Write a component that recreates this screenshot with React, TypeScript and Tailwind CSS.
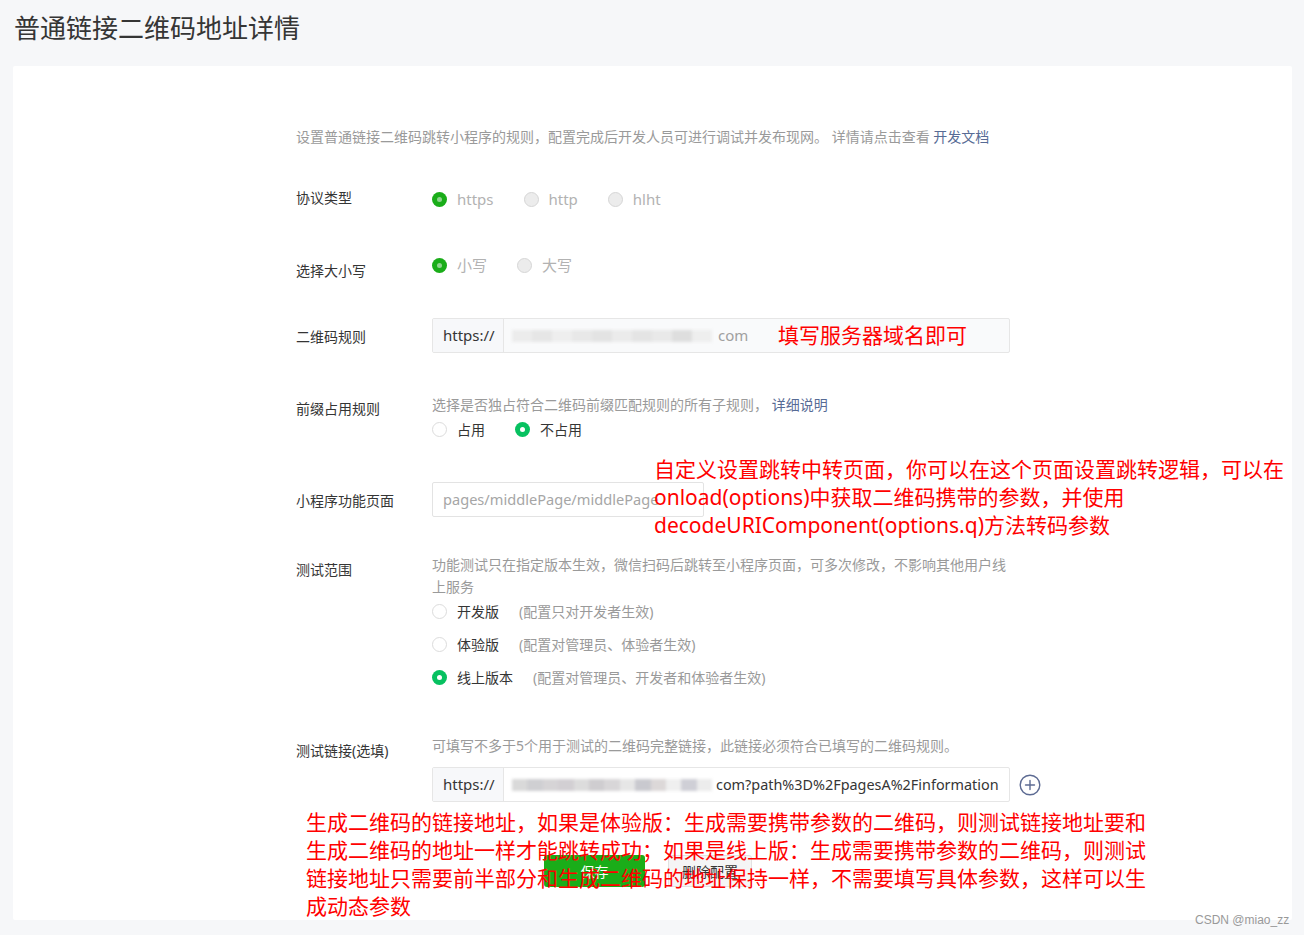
import { ReactNode } from "react";

const FONT = "font-['Noto_Sans','Noto_Sans_CJK_SC',sans-serif]";

type RadioKind = "on" | "onDisabled" | "off" | "offDisabled";

function Radio({ kind }: { kind: RadioKind }) {
  if (kind === "on" || kind === "onDisabled") {
    return (
      <span
        className={`flex h-[15px] w-[15px] shrink-0 items-center justify-center rounded-full ${
          kind === "on" ? "bg-[#07c160]" : "bg-[#1aad19]"
        }`}
      >
        <span
          className={`h-[5px] w-[5px] rounded-full ${kind === "on" ? "bg-white" : "bg-[#8fd48e]"}`}
        />
      </span>
    );
  }
  return (
    <span
      className={`h-[15px] w-[15px] shrink-0 rounded-full border ${
        kind === "off" ? "border-[#dcdcdc] bg-white" : "border-[#d6d6d6] bg-[#ececec]"
      }`}
    />
  );
}

function Option({ kind, label, note, muted }: { kind: RadioKind; label: string; note?: string; muted?: boolean }) {
  return (
    <label className="flex h-5 items-center">
      <Radio kind={kind} />
      <span className={`ml-[10px] ${muted ? "text-[15px] text-[#b2b2b2]" : "text-[14px] text-[#353535]"}`}>{label}</span>
      {note && <span className="ml-5 text-[14px] text-[#9a9a9a]">{note}</span>}
    </label>
  );
}

function Row({ label, labelTop, top, children }: { label: string; labelTop: string; top: string; children: ReactNode }) {
  return (
    <div className={`flex ${top}`}>
      <div className={`w-[136px] shrink-0 text-[14px] leading-5 text-[#353535] ${labelTop}`}>{label}</div>
      <div className="flex-1">{children}</div>
    </div>
  );
}

// blurred-out domain in the screenshot
function Blurred({ shades }: { shades: string[] }) {
  return (
    <div className="flex h-[12px] w-[200px] shrink-0 items-center blur-[1.5px]">
      {shades.map((c, i) => (
        <span key={i} className="h-full flex-1" style={{ backgroundColor: c }} />
      ))}
    </div>
  );
}

function PlusCircle() {
  return (
    <svg width="22" height="22" viewBox="0 0 22 22" fill="none" stroke="#5d6b93" strokeWidth="1.4">
      <circle cx="11" cy="11" r="9.8" />
      <path d="M11 6.5v9M6.5 11h9" strokeLinecap="round" />
    </svg>
  );
}

export default function App() {
  return (
    <div className={`relative h-[935px] w-full overflow-hidden bg-[#f6f7f9] ${FONT}`}>
      <h1 className="px-[14px] pt-[10px] text-[26px] leading-9 text-[#353535]">普通链接二维码地址详情</h1>

      <div className="relative ml-[13px] mr-[12px] mt-[20px] h-[854px] rounded-[2px] bg-white pl-[283px]">
        <p className="pt-[61px] text-[14px] leading-5 text-[#9a9a9a]">
          设置普通链接二维码跳转小程序的规则，配置完成后开发人员可进行调试并发布现网。 详情请点击查看{" "}
          <a className="text-[#576b95]">开发文档</a>
        </p>

        <Row label="协议类型" labelTop="mt-[-1px]" top="mt-[42px]">
          <div className="flex items-center gap-[30px]">
            <Option kind="onDisabled" label="https" muted />
            <Option kind="offDisabled" label="http" muted />
            <Option kind="offDisabled" label="hlht" muted />
          </div>
        </Row>

        <Row label="选择大小写" labelTop="mt-[6px]" top="mt-[46px]">
          <div className="flex items-center gap-[30px]">
            <Option kind="onDisabled" label="小写" muted />
            <Option kind="offDisabled" label="大写" muted />
          </div>
        </Row>

        <Row label="二维码规则" labelTop="mt-[9px]" top="mt-[37px]">
          <div className="relative flex h-[35px] w-[578px] overflow-hidden rounded-[2px] border border-[#e6e6e6] bg-[#f9fafb]">
            <div className="flex w-[71px] items-center border-r border-[#e6e6e6] bg-[#f7f8fa] pl-[10px] text-[15px] text-[#353535]">
              https://
            </div>
            <div className="flex items-center whitespace-nowrap pl-[8px] text-[15px] text-[#a0a0a0]">
              <Blurred shades={["#ececec", "#e6e6e6", "#eeeeee", "#e8e8e8", "#e3e3e3", "#ebebeb", "#e4e4e4", "#e9e9e9", "#dedede", "#eeeeee"]} />
              <span className="ml-[6px]">com</span>
            </div>
            <span className="absolute left-[345px] top-[2px] text-[21px] leading-7 text-[#ff0000]">填写服务器域名即可</span>
          </div>
        </Row>

        <Row label="前缀占用规则" labelTop="mt-[4px]" top="mt-[42px]">
          <p className="text-[14px] leading-5 text-[#9a9a9a]">
            选择是否独占符合二维码前缀匹配规则的所有子规则， <a className="text-[#576b95]">详细说明</a>
          </p>
          <div className="mt-[4px] flex items-center gap-[30px]">
            <Option kind="off" label="占用" />
            <Option kind="on" label="不占用" />
          </div>
        </Row>

        <Row label="小程序功能页面" labelTop="mt-[9px]" top="mt-[43px]">
          <div className="flex h-[35px] w-[272px] items-center overflow-hidden whitespace-nowrap rounded-[2px] border border-[#e3e3e3] bg-white pl-[10px] text-[14.6px] text-[#a6a6a6]">
            pages/middlePage/middlePage
          </div>
        </Row>

        <Row label="测试范围" labelTop="mt-[6px]" top="mt-[37px]">
          <p className="w-[580px] text-[14px] leading-[22px] text-[#9a9a9a]">
            功能测试只在指定版本生效，微信扫码后跳转至小程序页面，可多次修改，不影响其他用户线上服务
          </p>
          <div className="mt-[3px] flex flex-col gap-[13px]">
            <Option kind="off" label="开发版" note="(配置只对开发者生效)" />
            <Option kind="off" label="体验版" note="(配置对管理员、体验者生效)" />
            <Option kind="on" label="线上版本" note="(配置对管理员、开发者和体验者生效)" />
          </div>
        </Row>

        <Row label="测试链接(选填)" labelTop="mt-[5px]" top="mt-[49px]">
          <p className="text-[14px] leading-5 text-[#9a9a9a]">可填写不多于5个用于测试的二维码完整链接，此链接必须符合已填写的二维码规则。</p>
          <div className="mt-[11px] flex items-center">
            <div className="flex h-[35px] w-[578px] overflow-hidden rounded-[2px] border border-[#e6e6e6] bg-white">
              <div className="flex w-[71px] shrink-0 items-center border-r border-[#e6e6e6] bg-[#f7f8fa] pl-[10px] text-[15px] text-[#353535]">
                https://
              </div>
              <div className="flex items-center whitespace-nowrap pl-[8px] text-[14.4px] text-[#353535]">
                <Blurred shades={["#d9d9d9", "#cfcfd2", "#d6d4d6", "#d2cfd3", "#dcdcdc", "#cfcdd0", "#d8d6d8", "#e6e6e6", "#c9c9cf", "#dcd8d8", "#efefef", "#cfcfd6", "#ececec"]} />
                <span className="ml-[4px]">com?path%3D%2FpagesA%2Finformation</span>
              </div>
            </div>
            <span className="ml-[9px]">
              <PlusCircle />
            </span>
          </div>
        </Row>

        <div className="mt-[53px] flex gap-[23px] pl-[248px]">
          <button className="h-[32px] w-[101px] rounded-[3px] bg-[#1aad19] text-[14px] text-white">保存</button>
          <button className="h-[32px] w-[84px] rounded-[3px] border border-[#e2e2e2] bg-[#f5f5f5] text-[14px] text-[#353535]">
            删除配置
          </button>
        </div>

        {/* red annotations pasted over the screenshot */}
        <div className="absolute left-[641px] top-[389px] whitespace-nowrap text-[21px] leading-7 text-[#ff0000]">
          自定义设置跳转中转页面，你可以在这个页面设置跳转逻辑，可以在
          <br />
          onload(options)中获取二维码携带的参数，并使用
          <br />
          decodeURIComponent(options.q)方法转码参数
        </div>
        <div className="absolute left-[293px] top-[742px] whitespace-nowrap text-[21px] leading-7 text-[#ff0000]">
          生成二维码的链接地址，如果是体验版：生成需要携带参数的二维码，则测试链接地址要和
          <br />
          生成二维码的地址一样才能跳转成功；如果是线上版：生成需要携带参数的二维码，则测试
          <br />
          链接地址只需要前半部分和生成二维码的地址保持一样，不需要填写具体参数，这样可以生
          <br />
          成动态参数
        </div>
      </div>

      <span className="absolute left-[1195px] top-[911px] font-['Liberation_Sans',sans-serif] text-[12px] text-[#999]">CSDN @miao_zz</span>
    </div>
  );
}
